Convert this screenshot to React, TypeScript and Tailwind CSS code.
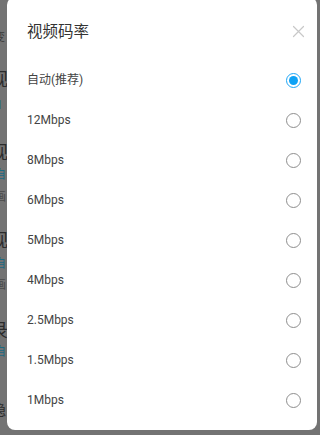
import React from "react";

const options = [
  "自动(推荐)",
  "12Mbps",
  "8Mbps",
  "6Mbps",
  "5Mbps",
  "4Mbps",
  "2.5Mbps",
  "1.5Mbps",
  "1Mbps",
];

function Radio({ checked }: { checked: boolean }) {
  if (checked) {
    return (
      <span className="flex h-[15px] w-[15px] items-center justify-center rounded-full border-[1.5px] border-[#1ea6f6]">
        <span className="h-[9px] w-[9px] rounded-full bg-[#0ea2f5]" />
      </span>
    );
  }
  return <span className="h-[15px] w-[15px] rounded-full border-[1.5px] border-[#8e8e8e]" />;
}

export default function App() {
  const font = { fontFamily: 'Roboto, "Noto Sans CJK SC", sans-serif' };
  return (
    <div className="relative h-[435px] w-[320px] overflow-hidden bg-[#737373]" style={font}>
      {/* dimmed page behind */}
      <div className="flex flex-col pt-[32px] text-[#2b2b2b]">
        <div className="-ml-[6px] h-[36px] text-[11px] leading-[12px] text-[#3a3a3a]">变</div>
        <div className="-ml-[10px] h-[30px] text-[18px] leading-[24px]">视</div>
        <div className="-ml-[4px] h-[46px] text-[12px] leading-[14px] text-[#1d6a82]">1</div>
        <div className="-ml-[10px] h-[26px] text-[18px] leading-[18px]">视</div>
        <div className="-ml-[6px] h-[20px] text-[12px] leading-[10px] text-[#1d6a82]">自</div>
        <div className="-ml-[6px] h-[42px] text-[12px] leading-[14px] text-[#4a4a4a]">画</div>
        <div className="-ml-[10px] h-[26px] text-[18px] leading-[18px]">视</div>
        <div className="-ml-[6px] h-[20px] text-[12px] leading-[12px] text-[#1d6a82]">自</div>
        <div className="-ml-[6px] h-[44px] text-[12px] leading-[14px] text-[#4a4a4a]">画</div>
        <div className="-ml-[10px] h-[22px] text-[18px] leading-[18px]">录</div>
        <div className="-ml-[6px] h-[58px] text-[12px] leading-[16px] text-[#1d6a82]">自</div>
        <div className="-ml-[8px] h-[20px] text-[14px] leading-[16px]">隐</div>
      </div>

      {/* dialog */}
      <div className="absolute left-[7px] top-[-3px] h-[433px] w-[310px] rounded-[8px] bg-white">
        <div className="flex h-[63px] items-start justify-between pl-[20px] pr-[12px] pt-[24px]">
          <span className="text-[15.5px] leading-[22px] text-[#333333]">视频码率</span>
          <svg width="13" height="13" viewBox="0 0 13 13" className="mt-[4px]">
            <path d="M1.5 1.5 L11.5 11.5 M11.5 1.5 L1.5 11.5" stroke="#c8c8c8" strokeWidth="1.2" strokeLinecap="round" />
          </svg>
        </div>
        <div className="flex flex-col">
          {options.map((o, i) => (
            <div key={o} className="flex h-[40px] items-center justify-between pl-[20px] pr-[16px]">
              <span className="text-[12px] leading-[16px] text-[#444444]">{o}</span>
              <Radio checked={i === 0} />
            </div>
          ))}
        </div>
      </div>
    </div>
  );
}
